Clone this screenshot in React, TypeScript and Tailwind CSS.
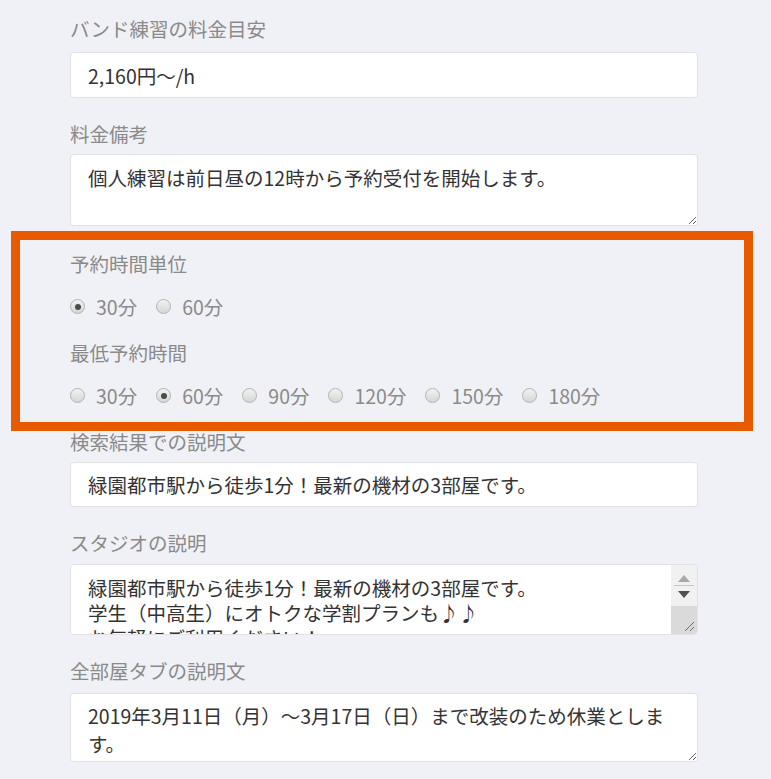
const font = { fontFamily: '"Noto Sans CJK JP", "Noto Sans", sans-serif' };

function Label({ children, className = "" }: { children: React.ReactNode; className?: string }) {
  return <div className={`text-[19.5px] leading-[25px] text-[#8a8a8a] ${className}`}>{children}</div>;
}

function Radio({ label, checked = false }: { label: string; checked?: boolean }) {
  return (
    <label className="flex items-center gap-[11px] mr-[19px]">
      <span className="w-[15px] h-[15px] rounded-full border border-[#b3b3b3] bg-gradient-to-b from-[#f2f2f2] to-[#d6d6d6] flex items-center justify-center">
        {checked && <span className="w-[6px] h-[6px] rounded-full bg-[#4a4a4a]" />}
      </span>
      <span className="text-[19.5px] leading-[25px] text-[#8a8a8a]">{label}</span>
    </label>
  );
}

function App() {
  const unitOptions = ["30分", "60分"];
  const minOptions = ["30分", "60分", "90分", "120分", "150分", "180分"];

  return (
    <div className="min-h-screen bg-[#f0f1f6] pt-[16px]" style={font}>
      <div className="ml-[70px] w-[628px]">
        {/* 料金 */}
        <Label>バンド練習の料金目安</Label>
        <input
          readOnly
          defaultValue="2,160円〜/h"
          className="mt-[11px] w-full h-[46px] bg-white border border-[#e1e1e6] rounded-[4px] px-[17px] text-[19.5px] text-[#333] outline-none"
        />

        <Label className="mt-[23px]">料金備考</Label>
        <textarea
          readOnly
          defaultValue="個人練習は前日昼の12時から予約受付を開始します。"
          className="mt-[8px] block w-full h-[72px] bg-white border border-[#e1e1e6] rounded-[4px] px-[17px] pt-[10px] text-[19.5px] leading-[25px] text-[#333] outline-none"
        />

        {/* 予約時間 */}
        <div className="relative mt-[25px]">
          <Label>予約時間単位</Label>
          <div className="mt-[18px] flex items-center">
            {unitOptions.map((o, i) => (
              <Radio key={o} label={o} checked={i === 0} />
            ))}
          </div>
          <Label className="mt-[21px]">最低予約時間</Label>
          <div className="mt-[18px] flex items-center">
            {minOptions.map((o, i) => (
              <Radio key={o} label={o} checked={i === 1} />
            ))}
          </div>
          <div className="absolute -left-[59px] -top-[20px] -right-[55px] -bottom-[23px] border-[9px] border-[#e85a00] z-10 pointer-events-none" />
        </div>

        {/* 説明 */}
        <Label className="mt-[21px]">検索結果での説明文</Label>
        <input
          readOnly
          defaultValue="緑園都市駅から徒歩1分！最新の機材の3部屋です。"
          className="mt-[8px] w-full h-[45px] bg-white border border-[#e1e1e6] rounded-[4px] px-[17px] text-[19.5px] text-[#333] outline-none"
        />

        <Label className="mt-[23px]">スタジオの説明</Label>
        <div className="mt-[9px] flex h-[71px] w-full bg-white border border-[#e1e1e6] rounded-[4px] overflow-hidden">
          <textarea
            readOnly
            defaultValue={"緑園都市駅から徒歩1分！最新の機材の3部屋です。\n学生（中高生）にオトクな学割プランも♪♪\nお気軽にご利用ください！"}
            className="flex-1 h-full resize-none overflow-hidden bg-white px-[17px] pt-[10px] text-[19.5px] leading-[25px] text-[#333] outline-none"
          />
          <div className="w-[26px] flex flex-col bg-[#f1f1f1]">
            <div className="h-[20px] flex items-end justify-center pb-[3px]">
              <svg width="12" height="7" viewBox="0 0 12 7">
                <path d="M0 7 L6 0 L12 7 Z" fill="#a9a9a9" />
              </svg>
            </div>
            <div className="mx-[3px] h-px bg-[#c9c9c9]" />
            <div className="h-[20px] flex items-start justify-center pt-[5px]">
              <svg width="12" height="7" viewBox="0 0 12 7">
                <path d="M0 0 L12 0 L6 7 Z" fill="#505050" />
              </svg>
            </div>
            <div className="flex-1 bg-[#dadada] flex items-end justify-end pr-[2px] pb-[2px]">
              <svg width="12" height="12" viewBox="0 0 12 12">
                <path d="M11 2 L2 11 M11 7 L7 11" stroke="#6b6b6b" strokeWidth="1" />
              </svg>
            </div>
          </div>
        </div>

        <Label className="mt-[23px]">全部屋タブの説明文</Label>
        <textarea
          readOnly
          defaultValue="2019年3月11日（月）～3月17日（日）まで改装のため休業とします。"
          className="mt-[10px] block w-full h-[69px] bg-white border border-[#e1e1e6] rounded-[4px] px-[17px] pt-[8px] text-[19.5px] leading-[28px] text-[#333] outline-none"
        />
      </div>
    </div>
  );
}

export default App;
